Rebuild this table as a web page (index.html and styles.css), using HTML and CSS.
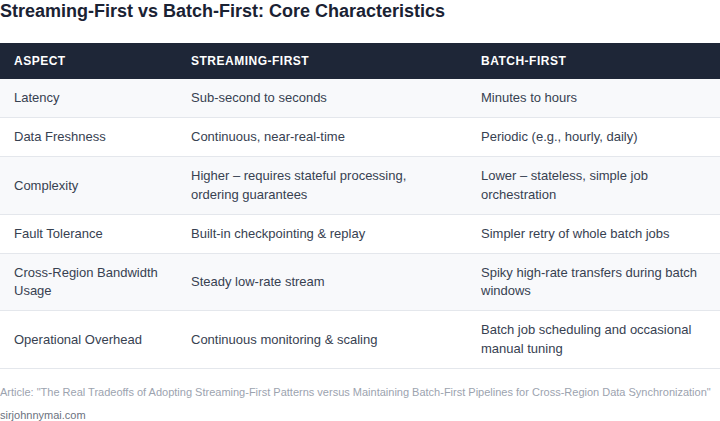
FILE: index.html
```html
<!DOCTYPE html>
<html>
<head>
<meta charset="utf-8">
<link rel="stylesheet" href="styles.css">
</head>
<body>
<h1 class="title">Streaming-First vs Batch-First: Core Characteristics</h1>
<table class="cmp">
<colgroup><col class="c1"><col class="c2"><col class="c3"></colgroup>
<thead>
<tr><th>Aspect</th><th>Streaming-First</th><th>Batch-First</th></tr>
</thead>
<tbody>
<tr><td>Latency</td><td>Sub-second to seconds</td><td>Minutes to hours</td></tr>
<tr><td>Data Freshness</td><td>Continuous, near-real-time</td><td>Periodic (e.g., hourly, daily)</td></tr>
<tr><td>Complexity</td><td>Higher – requires stateful processing, ordering guarantees</td><td>Lower – stateless, simple job orchestration</td></tr>
<tr><td>Fault Tolerance</td><td>Built-in checkpointing &amp; replay</td><td>Simpler retry of whole batch jobs</td></tr>
<tr><td>Cross-Region Bandwidth Usage</td><td>Steady low-rate stream</td><td>Spiky high-rate transfers during batch windows</td></tr>
<tr><td>Operational Overhead</td><td>Continuous monitoring &amp; scaling</td><td>Batch job scheduling and occasional manual tuning</td></tr>
</tbody>
</table>
<p class="source">Article: "The Real Tradeoffs of Adopting Streaming-First Patterns versus Maintaining Batch-First Pipelines for Cross-Region Data Synchronization"</p>
<p class="site">sirjohnnymai.com</p>
</body>
</html>
```
FILE: styles.css
```css
html, body { margin: 0; padding: 0; background: #ffffff; }
body { font-family: "Liberation Sans", Arial, sans-serif; color: #374151; width: 720px; }
.title { margin: 0; padding-top: 1px; font-size: 18px; line-height: 20px; font-weight: 700; color: #1a2233; }
.cmp { margin-top: 22px; width: 720px; border-collapse: collapse; font-size: 13px; }
.c1 { width: 177px; }
.c2 { width: 290px; }
.c3 { width: 253px; }
.cmp th { background: #1e2637; color: #ffffff; text-align: left; font-size: 12px; font-weight: 700; text-transform: uppercase; letter-spacing: 0.5px; padding: 0 14px; height: 36px; }
.cmp td { padding: 10px 14px; line-height: 18.2px; border-bottom: 1px solid #e4e7ec; vertical-align: middle; color: #374151; }
.cmp tbody tr:nth-child(odd) td { background: #f8f9fb; }
.source { margin: 16px 0 0; font-size: 11px; line-height: 14px; color: #9ca3af; white-space: nowrap; }
.site { margin: 9px 0 0; font-size: 11px; line-height: 14px; color: #6b7280; }
```
